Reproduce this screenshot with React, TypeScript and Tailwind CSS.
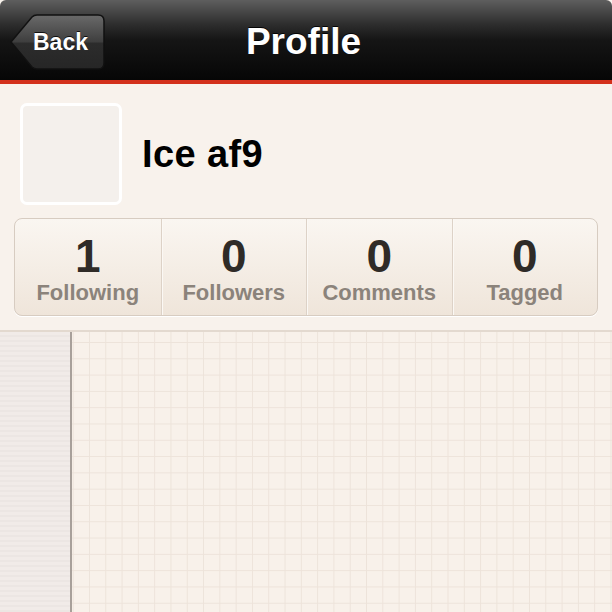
import React from "react";

const stats = [
  { value: "1", label: "Following" },
  { value: "0", label: "Followers" },
  { value: "0", label: "Comments" },
  { value: "0", label: "Tagged" },
];

function BackButton() {
  return (
    <button className="relative ml-[10px] flex h-[56px] w-[95px] items-center">
      <svg className="absolute inset-0" width="95" height="56" viewBox="0 0 95 56">
        <defs>
          <linearGradient id="backFill" x1="0" y1="0" x2="0" y2="1">
            <stop offset="0" stopColor="#6a6a6a" />
            <stop offset="0.5" stopColor="#3e3e3e" />
            <stop offset="0.52" stopColor="#2c2c2c" />
            <stop offset="1" stopColor="#262626" />
          </linearGradient>
        </defs>
        <path
          d="M1 28 L22 3 Q24 1 27 1 L88 1 Q94 1 94 7 L94 49 Q94 55 88 55 L27 55 Q24 55 22 53 Z"
          fill="url(#backFill)"
          stroke="#111"
          strokeWidth="1.5"
        />
      </svg>
      <span className="relative pl-[23px] text-[23px] font-bold text-white [text-shadow:0_-1px_0_rgba(0,0,0,0.8)]">
        Back
      </span>
    </button>
  );
}

export default function App() {
  return (
    <div className="flex h-[612px] w-[612px] flex-col overflow-hidden bg-[#f8f2ec] font-['Liberation_Sans',Arial,sans-serif]">
      {/* nav bar */}
      <div className="grid h-[84px] shrink-0 grid-cols-[1fr_auto_1fr] items-center rounded-t-[6px] border-b-4 border-[#d3301b] bg-[linear-gradient(to_bottom,#5e5e5e_0%,#2e2e2e_30%,#151515_50%,#060606_100%)] pt-[4px]">
        <div className="flex">
          <BackButton />
        </div>
        <h1 className="pr-[5px] text-[37px] font-bold text-white [text-shadow:0_-1px_0_rgba(0,0,0,0.9)]">
          Profile
        </h1>
        <div />
      </div>

      {/* profile row */}
      <div className="flex items-center gap-[20px] px-[20px] pt-[19px]">
        <div className="h-[102px] w-[102px] rounded-[7px] border-[3px] border-white bg-[#f4f0ec]" />
        <div className="text-[38px] font-bold tracking-[0.4px] text-black">Ice af9</div>
      </div>

      {/* stats */}
      <div className="mx-[14px] mt-[13px] grid h-[98px] grid-cols-4 overflow-hidden rounded-[8px] border border-[#d7ccc1] bg-[linear-gradient(to_bottom,#faf6f1,#efe5da)] shadow-[0_1px_0_#ffffff]">
        {stats.map((s, i) => (
          <div
            key={s.label}
            className={`flex flex-col items-center pt-[14px] ${i > 0 ? "border-l border-[#ddd2c7] shadow-[inset_1px_0_0_#fbf8f4]" : ""}`}
          >
            <div className="text-[46px] leading-[46px] font-bold text-[#2f2b27]">{s.value}</div>
            <div className="mt-[3px] text-[22px] leading-[22px] font-bold text-[#8b837b]">{s.label}</div>
          </div>
        ))}
      </div>

      {/* canvas */}
      <div className="mt-[14px] flex flex-1 border-t-2 border-[#e3d9cf]">
        <div className="w-[70px] shrink-0 bg-[repeating-linear-gradient(to_bottom,#f1ebe8_0px,#f1ebe8_3px,#ece6e3_3px,#ece6e3_5px)]" />
        <div className="w-[2px] shrink-0 bg-[#a8a09a]" />
        <div className="flex-1 bg-[#f8f1ea] bg-[linear-gradient(to_right,#ede3da_1px,transparent_1px),linear-gradient(to_bottom,#ede3da_1px,transparent_1px)] bg-[size:16.3px_16.3px] bg-[position:0.7px_10px]" />
      </div>
    </div>
  );
}
